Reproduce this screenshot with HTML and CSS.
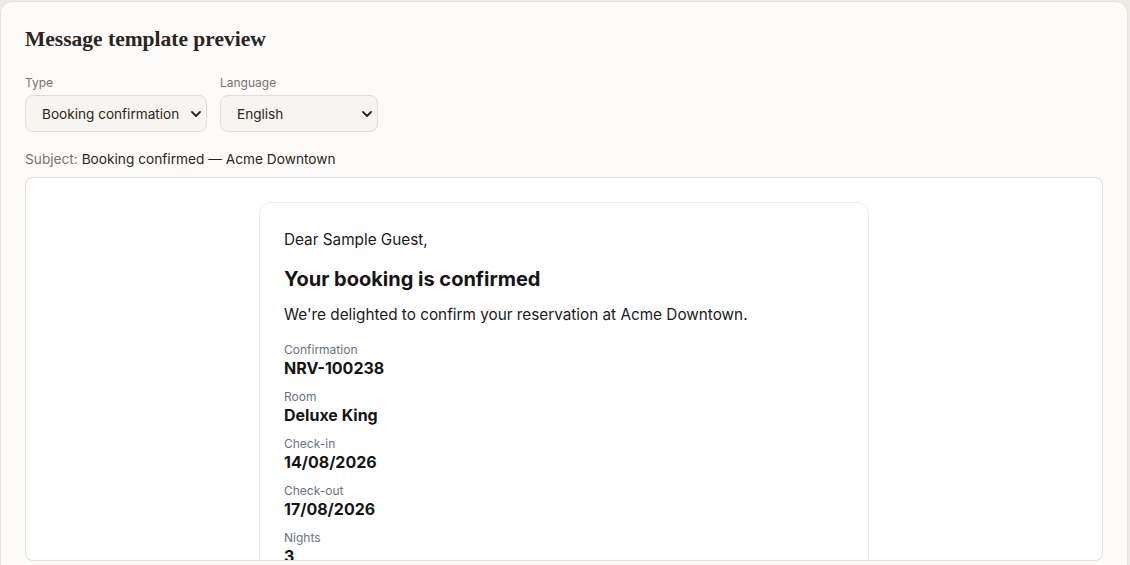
FILE: index.html
```html
<!DOCTYPE html>
<html lang="en">
<head>
    <meta charset="UTF-8">
    <meta name="viewport" content="width=device-width, initial-scale=1.0">
    <title>Message template preview</title>
    <link rel="stylesheet" href="styles.css">
</head>
<body>
    <div class="card">
        <h1 class="card-title">Message template preview</h1>

        <div class="filters">
            <div class="field">
                <label for="type">Type</label>
                <div class="select-wrap type-select">
                    <select id="type" name="type">
                        <option>Booking confirmation</option>
                        <option>Pre-arrival</option>
                        <option>Cancellation</option>
                    </select>
                    <svg class="chevron" width="10" height="6" viewBox="0 0 10 6"><path d="M1 1l4 4 4-4" fill="none" stroke="#2b2520" stroke-width="1.8" stroke-linecap="round" stroke-linejoin="round"/></svg>
                </div>
            </div>
            <div class="field">
                <label for="language">Language</label>
                <div class="select-wrap lang-select">
                    <select id="language" name="language">
                        <option>English</option>
                        <option>Français</option>
                        <option>Deutsch</option>
                    </select>
                    <svg class="chevron" width="10" height="6" viewBox="0 0 10 6"><path d="M1 1l4 4 4-4" fill="none" stroke="#2b2520" stroke-width="1.8" stroke-linecap="round" stroke-linejoin="round"/></svg>
                </div>
            </div>
        </div>

        <div class="subject"><span class="subject-label">Subject:</span> Booking confirmed — Acme Downtown</div>

        <div class="preview">
            <div class="email">
                <p class="greeting">Dear Sample Guest,</p>
                <h2 class="email-heading">Your booking is confirmed</h2>
                <p class="intro">We're delighted to confirm your reservation at Acme Downtown.</p>

                <div class="detail">
                    <div class="detail-label">Confirmation</div>
                    <div class="detail-value">NRV-100238</div>
                </div>
                <div class="detail">
                    <div class="detail-label">Room</div>
                    <div class="detail-value">Deluxe King</div>
                </div>
                <div class="detail">
                    <div class="detail-label">Check-in</div>
                    <div class="detail-value">14/08/2026</div>
                </div>
                <div class="detail">
                    <div class="detail-label">Check-out</div>
                    <div class="detail-value">17/08/2026</div>
                </div>
                <div class="detail">
                    <div class="detail-label">Nights</div>
                    <div class="detail-value">3</div>
                </div>
                <div class="detail">
                    <div class="detail-label">Guests</div>
                    <div class="detail-value">2</div>
                </div>
            </div>
        </div>
    </div>
</body>
</html>
```

FILE: styles.css
```css
html, body {
    height: 100%;
}
body {
    margin: 0;
    padding: 1px 0 0 0;
    box-sizing: border-box;
    overflow: hidden;
    background-color: #eeebe6;
    font-family: Inter, "Noto Sans", sans-serif;
    color: #2b2520;
}
.card {
    width: 1128px;
    height: 600px;
    box-sizing: border-box;
    padding: 24px;
    background-color: #fcfbf9;
    border: 1px solid #e6e1da;
    border-radius: 12px;
}
.card-title {
    margin: -1px 0 0;
    font-family: "Liberation Serif", "DejaVu Serif", serif;
    font-size: 21.5px;
    line-height: 28px;
    font-weight: 700;
    color: #2b2420;
}
.filters {
    display: flex;
    gap: 13px;
    margin-top: 22px;
}
.field label {
    display: block;
    font-size: 12px;
    line-height: 16px;
    color: #7a736c;
    margin-bottom: 4px;
}
.select-wrap {
    position: relative;
}
.select-wrap select {
    appearance: none;
    -webkit-appearance: none;
    width: 100%;
    height: 37px;
    box-sizing: border-box;
    padding: 0 22px 0 16px;
    font-family: Inter, "Noto Sans", sans-serif;
    font-size: 13.6px;
    color: #2b2520;
    background-color: #f7f5f1;
    border: 1px solid #e2ddd5;
    border-radius: 8px;
    outline: none;
}
.type-select {
    width: 182px;
}
.lang-select {
    width: 158px;
}
.chevron {
    position: absolute;
    right: 6px;
    top: 16px;
    pointer-events: none;
}
.subject {
    margin-top: 18px;
    font-size: 13.7px;
    line-height: 18px;
    color: #2b2520;
}
.subject-label {
    color: #7a736c;
}
.preview {
    margin-top: 9px;
    height: 384px;
    box-sizing: border-box;
    overflow: hidden;
    padding-top: 24px;
    background-color: #fff;
    border: 1px solid #e3ded7;
    border-radius: 8px;
}
.email {
    width: 610px;
    box-sizing: border-box;
    margin: 0 auto;
    padding: 25px 24px 24px;
    border: 1px solid #ebebeb;
    border-radius: 12px;
    color: #1a1a1a;
}
.greeting {
    margin: 0;
    font-size: 15.3px;
    line-height: 24px;
}
.email-heading {
    margin: 13px 0 0;
    font-size: 20px;
    line-height: 28px;
    font-weight: 700;
    color: #151515;
}
.intro {
    margin: 10px 0 15px;
    font-size: 15.3px;
    line-height: 24px;
}
.detail {
    margin-bottom: 11px;
}
.detail-label {
    font-size: 12px;
    line-height: 16px;
    color: #6b7280;
}
.detail-value {
    font-size: 16px;
    line-height: 20px;
    font-weight: 700;
    color: #151515;
}
```
